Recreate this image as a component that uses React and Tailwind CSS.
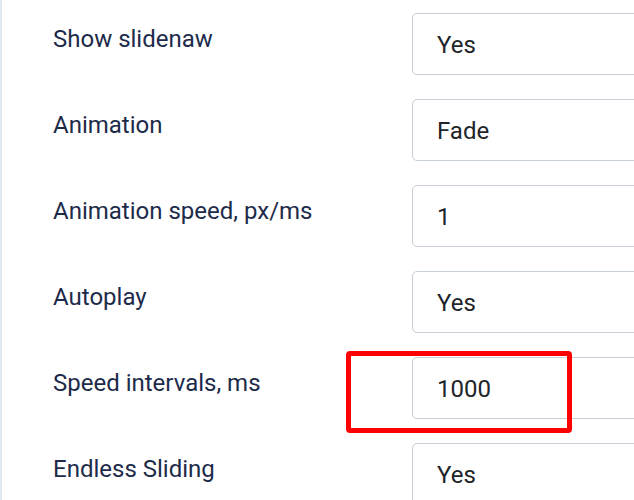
const rows = [
  { label: "Show slidenaw", value: "Yes" },
  { label: "Animation", value: "Fade" },
  { label: "Animation speed, px/ms", value: "1" },
  { label: "Autoplay", value: "Yes" },
  { label: "Speed intervals, ms", value: "1000" },
  { label: "Endless Sliding", value: "Yes" },
];

export default function App() {
  return (
    <div
      className="relative flex h-[500px] w-[634px] overflow-hidden bg-white"
      style={{ fontFamily: "Roboto, 'Liberation Sans', sans-serif" }}
    >
      <div className="w-[2px] shrink-0 bg-[#e1e9f0]" />
      <div className="flex flex-col gap-6 pt-[13px] pl-[51px]">
        {rows.map((row) => (
          <div key={row.label} className="flex h-[62px] shrink-0">
            <div className="w-[359px] shrink-0 pt-2 text-[24px] leading-9 text-[#1d2b4a]">
              {row.label}
            </div>
            <div className="flex h-[62px] w-[400px] items-center rounded-[5px] border border-[#c7cfd8] px-6 pt-[2px] text-[24px] leading-7 text-[#212529]">
              {row.value}
            </div>
          </div>
        ))}
      </div>
      {/* highlight overlay */}
      <div className="absolute left-[346px] top-[351px] h-[82px] w-[226px] rounded-[4px] border-[5px] border-[#ff0000]" />
    </div>
  );
}
